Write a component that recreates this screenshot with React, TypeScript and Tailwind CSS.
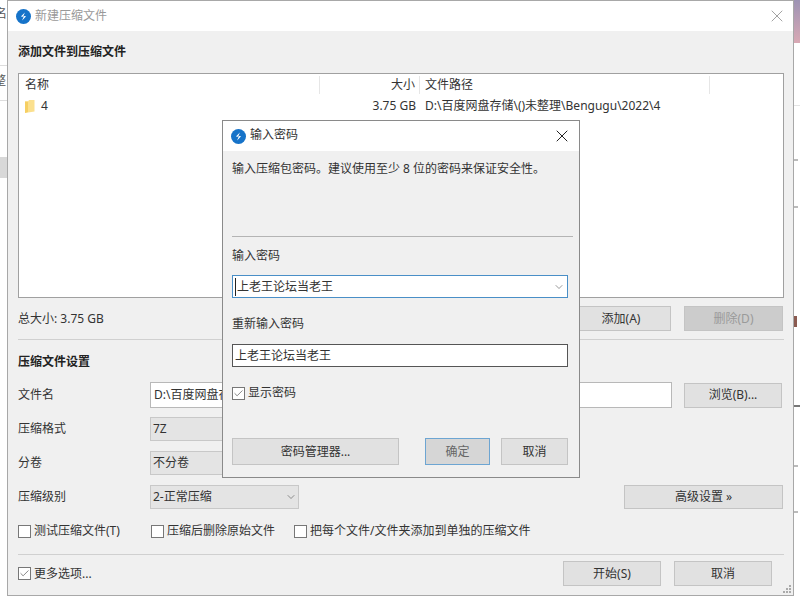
import { ChevronDown, X, Check } from "lucide-react"

function AppIcon() {
  return (
    <svg width="15" height="15" viewBox="0 0 15 15" className="shrink-0">
      <circle cx="7.5" cy="7.5" r="7.5" fill="#1673c9" />
      <path d="M8.9 3.4 4.9 7.6l2.2.2zM10.1 7.2l-2.2-.2-1.8 4.6z" fill="#fff" />
    </svg>
  )
}

function FolderIcon() {
  return (
    <svg width="10" height="13" viewBox="0 0 10 13" className="shrink-0">
      <path d="M0 1.5h3l1-1.5h5.5v11.5L0 13z" fill="#fbe08e" />
      <path d="M0 1.5h3V12l-3 1z" fill="#f6cf62" />
    </svg>
  )
}

function Btn({ label, className }: { label: string; className: string }) {
  return <div className={`flex items-center justify-center border ${className}`}>{label}</div>
}

function Box({ checked }: { checked?: boolean }) {
  return (
    <div className="flex h-[13px] w-[13px] shrink-0 items-center justify-center border border-[#777] bg-white">
      {checked && <Check size={11} strokeWidth={1.4} className="text-[#444]" />}
    </div>
  )
}

function Divider({ className }: { className: string }) {
  return <div className={`h-px bg-[#d0d0d0] ${className}`} />
}

function SelectBox({ label }: { label: string }) {
  return (
    <div className="flex h-[24px] w-[149px] items-center justify-between border border-[#c8c8c8] bg-[#e4e4e4] pl-[2px] pr-[1px]">
      <span>{label}</span>
      <ChevronDown size={12} strokeWidth={1} className="text-[#333]" />
    </div>
  )
}

function FieldRow({ label, className, children }: { label: string; className: string; children: React.ReactNode }) {
  return (
    <div className={`flex items-center ${className}`}>
      <span className="w-[132px]">{label}</span>
      {children}
    </div>
  )
}

const normalBtn = "border-[#c4c4c4] bg-[#e1e1e1] text-[#333]"

function PasswordDialog() {
  return (
    <div className="absolute left-[222px] top-[120px] flex h-[358px] w-[358px] flex-col border border-[#8a8a8a] bg-[#f0f0f0]">
      <div className="flex h-[30px] items-center justify-between bg-white pl-[8px] pr-[7px]">
        <div className="flex items-center gap-[4px]">
          <AppIcon />
          <span className="mb-[2px]">输入密码</span>
        </div>
        <X size={20} strokeWidth={1.2} className="text-[#222]" />
      </div>
      <div className="flex grow flex-col pl-[9px] pr-[11px]">
        <div className="mt-[9px] h-[18px] leading-[18px]">输入压缩包密码。建议使用至少 8 位的密码来保证安全性。</div>
        <div className="mt-[58px] mr-[-5px] h-px bg-[#b4b4b4]" />
        <div className="mt-[10px] h-[18px] leading-[18px]">输入密码</div>
        <div className="mt-[10px] flex h-[23px] items-center justify-between border border-[#4a8fc7] bg-white pl-[2px] pr-[2px]">
          <span className="border-l border-[#222] pl-px">上老王论坛当老王</span>
          <ChevronDown size={12} strokeWidth={1} className="text-[#333]" />
        </div>
        <div className="mt-[17px] h-[18px] leading-[18px]">重新输入密码</div>
        <div className="mt-[11px] flex h-[23px] items-center border border-[#555] bg-white pl-[2px]">上老王论坛当老王</div>
        <div className="mt-[17px] flex items-center gap-[3px]">
          <Box checked />
          <span>显示密码</span>
        </div>
        <div className="mt-[36px] flex items-center">
          <Btn label="密码管理器..." className={`h-[27px] w-[167px] ${normalBtn}`} />
          <Btn label="确定" className="ml-[26px] h-[27px] w-[65px] border-[#6da5d2] bg-[#d6d6d6] text-[#666]" />
          <Btn label="取消" className={`ml-[11px] h-[27px] w-[67px] ${normalBtn}`} />
        </div>
      </div>
    </div>
  )
}

export default function App() {
  return (
    <div className="relative h-[601px] w-[800px] overflow-hidden bg-white font-['Noto_Sans','Noto_Sans_CJK_SC',sans-serif] text-[12px] text-[#333]">
      {/* desktop behind the window */}
      <span className="absolute left-[-5px] top-[5px] text-[#555]">名</span>
      <span className="absolute left-[-6px] top-[72px] text-[#555]">整</span>
      <div className="absolute left-0 top-[65px] h-px w-[7px] bg-[#ddd]" />
      <div className="absolute left-0 top-[100px] h-px w-[7px] bg-[#ddd]" />
      <div className="absolute left-0 top-[157px] h-[21px] w-[7px] bg-[#d8d8d8]" />
      <div className="absolute right-0 top-0 h-[43px] w-[6px] bg-gradient-to-b from-[#9d93b4] to-[#d9a9b4]" />
      <div className="absolute left-[794px] top-[105px] h-px w-[6px] bg-[#e4e4e4]" />
      <div className="absolute left-[794px] top-[159px] h-[2px] w-[4px] bg-[#bbb]" />
      <div className="absolute left-[794px] top-[206px] h-[2px] w-[4px] bg-[#bbb]" />
      <div className="absolute left-[794px] top-[316px] h-[11px] w-[3px] bg-[#8a5a50]" />
      <div className="absolute left-[794px] top-[405px] h-[2px] w-[6px] bg-[#777]" />
      <div className="absolute left-[794px] top-[465px] h-[2px] w-[4px] bg-[#bbb]" />
      <div className="absolute left-[794px] top-[511px] h-[2px] w-[4px] bg-[#bbb]" />

      <div className="absolute left-[7px] top-0 flex h-[596px] w-[787px] flex-col border border-[#a8a8a8] bg-[#f0f0f0]">
        <div className="flex h-[30px] shrink-0 items-center justify-between bg-white pl-[8px] pr-[6px]">
          <div className="flex items-center gap-[4px]">
            <AppIcon />
            <span className="text-[#999]">新建压缩文件</span>
          </div>
          <X size={20} strokeWidth={1.1} className="text-[#999]" />
        </div>

        <div className="flex grow flex-col pl-[10px] pr-[9px]">
          <div className="mt-[12px] h-[18px] font-bold leading-[18px] text-[#222]">添加文件到压缩文件</div>

          <div className="mt-[12px] h-[225px] border border-[#a0a0a0] bg-white">
            <div className="flex h-[22px] items-center">
              <span className="w-[301px] border-r border-[#e6e6e6] pl-[6px]">名称</span>
              <span className="w-[100px] border-r border-[#e6e6e6] pr-[4px] text-right">大小</span>
              <span className="w-[290px] border-r border-[#e6e6e6] pl-[5px]">文件路径</span>
            </div>
            <div className="flex h-[20px] items-center">
              <div className="flex w-[301px] items-center pl-[6px]">
                <FolderIcon />
                <span className="ml-[6px]">4</span>
              </div>
              <span className="w-[100px] pr-[4px] text-right">3.75 GB</span>
              <span className="pl-[5px]">D:\百度网盘存储\()未整理\Bengugu\2022\4</span>
            </div>
          </div>

          <div className="mt-[8px] mr-px flex h-[25px] items-center justify-between">
            <span>总大小: 3.75 GB</span>
            <div className="flex gap-[13px]">
              <Btn label="添加(A)" className={`h-[25px] w-[100px] ${normalBtn}`} />
              <Btn label="删除(D)" className="h-[25px] w-[99px] border-[#c4c4c4] bg-[#cccccc] text-[#9a9a9a]" />
            </div>
          </div>

          <Divider className="mt-[8px]" />
          <div className="mt-[13px] h-[18px] font-bold leading-[18px] text-[#222]">压缩文件设置</div>

          <FieldRow label="文件名" className="mt-[11px] h-[26px]">
            <div className="flex h-[26px] w-[522px] items-center border border-[#b8b8b8] bg-white pl-[3px]">D:\百度网盘存储</div>
            <Btn label="浏览(B)..." className={`ml-[12px] h-[25px] w-[98px] ${normalBtn}`} />
          </FieldRow>
          <FieldRow label="压缩格式" className="mt-[9px] h-[24px]">
            <SelectBox label="7Z" />
          </FieldRow>
          <FieldRow label="分卷" className="mt-[10px] h-[24px]">
            <SelectBox label="不分卷" />
          </FieldRow>
          <FieldRow label="压缩级别" className="mt-[10px] h-[24px]">
            <SelectBox label="2-正常压缩" />
            <Btn label="高级设置 »" className={`ml-[325px] h-[24px] w-[159px] ${normalBtn}`} />
          </FieldRow>

          <div className="mt-[13px] flex h-[18px] items-center">
            <div className="flex w-[133px] items-center gap-[3px]">
              <Box />
              <span>测试压缩文件(T)</span>
            </div>
            <div className="flex w-[143px] items-center gap-[3px]">
              <Box />
              <span>压缩后删除原始文件</span>
            </div>
            <div className="flex items-center gap-[3px]">
              <Box />
              <span>把每个文件/文件夹添加到单独的压缩文件</span>
            </div>
          </div>

          <Divider className="mt-[14px]" />

          <div className="mt-[6px] flex h-[25px] items-center justify-between">
            <div className="flex items-center gap-[3px]">
              <Box checked />
              <span>更多选项...</span>
            </div>
            <div className="mr-[12px] flex gap-[13px]">
              <Btn label="开始(S)" className={`h-[25px] w-[98px] ${normalBtn}`} />
              <Btn label="取消" className={`h-[25px] w-[98px] ${normalBtn}`} />
            </div>
          </div>
        </div>
      </div>

      <svg width="10" height="10" viewBox="0 0 10 10" className="absolute left-[782px] top-[584px]" fill="#aaa">
        <rect x="7" y="1" width="2" height="2" />
        <rect x="4" y="4" width="2" height="2" />
        <rect x="7" y="4" width="2" height="2" />
        <rect x="1" y="7" width="2" height="2" />
        <rect x="4" y="7" width="2" height="2" />
        <rect x="7" y="7" width="2" height="2" />
      </svg>

      <PasswordDialog />
    </div>
  )
}
